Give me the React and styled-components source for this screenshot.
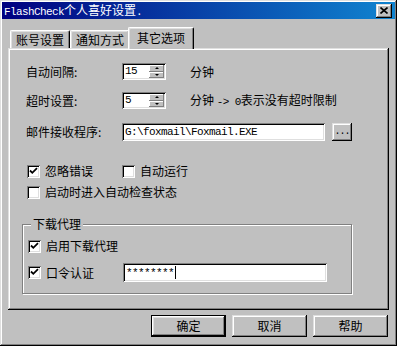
import React from "react";
import styled, { createGlobalStyle } from "styled-components";

const Global = createGlobalStyle`
  html, body { margin: 0; padding: 0; background: #c0c0c0; }
  body {
    font-family: "Noto Sans CJK SC", "Liberation Sans", sans-serif;
    font-size: 12px;
    color: #000;
  }
  * { box-sizing: border-box; }
`;

const raised = `box-shadow: inset -1px -1px #000, inset 1px 1px #dfdfdf, inset -2px -2px #808080, inset 2px 2px #fff;`;
const sunken = `box-shadow: inset 1px 1px #808080, inset -1px -1px #fff, inset 2px 2px #000, inset -2px -2px #dfdfdf;`;

const Window = styled.div`
  width: 397px;
  height: 346px;
  background: #c0c0c0;
  padding: 2px;
  ${raised}
  display: flex;
  flex-direction: column;
`;

const TitleBar = styled.div`
  height: 17px;
  flex: 0 0 17px;
  background: linear-gradient(to right, #000080, #1084d0);
  color: #fff;
  display: flex;
  align-items: center;
  justify-content: space-between;
  padding: 0 3px 0 2px;
  line-height: 14px;
`;

const TitleText = styled.span`
  font-size: 12px;
  white-space: nowrap;
`;

const Ascii = styled.span`
  font-family: "Liberation Mono", monospace;
  font-size: 11px;
  letter-spacing: -0.6px;
`;

const CloseBtn = styled.div`
  width: 16px;
  height: 14px;
  background: #c0c0c0;
  ${raised}
  display: flex;
  align-items: center;
  justify-content: center;
`;

const Body = styled.div`
  flex: 1;
  display: flex;
  flex-direction: column;
  padding: 0 6px;
`;

const TabStrip = styled.div`
  margin-top: 8px;
  height: 21px;
  flex: 0 0 21px;
  display: flex;
  align-items: flex-end;
  padding-left: 2px;
`;

const Tab = styled.div`
  position: relative;
  z-index: ${(p) => (p.$active ? 2 : 0)};
  width: ${(p) => (p.$active ? 66 : 60)}px;
  height: ${(p) => (p.$active ? 22 : 18)}px;
  margin: 0 ${(p) => (p.$active ? -2 : 0)}px ${(p) => (p.$active ? -1 : 0)}px;
  background: #c0c0c0;
  border-top: 1px solid #fff;
  border-left: 1px solid #fff;
  border-right: 1px solid #000;
  border-radius: 2px 2px 0 0;
  box-shadow: inset -1px 0 #808080, inset 1px 1px #dfdfdf;
  display: flex;
  align-items: ${(p) => (p.$active ? "flex-start" : "center")};
  padding-top: ${(p) => (p.$active ? 3 : 0)}px;
  justify-content: center;
  font-size: 12px;
  line-height: 14px;
`;

const Panel = styled.div`
  position: relative;
  z-index: 1;
  height: 262px;
  flex: 0 0 262px;
  background: #c0c0c0;
  ${raised}
  padding: 15px 0 0 18px;
  display: flex;
  flex-direction: column;
`;

const FieldRow = styled.div`
  display: grid;
  grid-template-columns: 96px auto auto 1fr;
  align-items: center;
  height: ${(p) => p.$h}px;
  margin-top: ${(p) => p.$mt || 0}px;
`;

const Label = styled.span`
  font-size: 12px;
  line-height: 14px;
  white-space: nowrap;
`;

const Unit = styled.span`
  margin-left: 24px;
  font-size: 12px;
  line-height: 14px;
  white-space: nowrap;
`;

const SpinBox = styled.div`
  width: 44px;
  height: 17px;
  background: #fff;
  padding: 2px 2px 2px 2px;
  ${sunken}
  display: flex;
`;

const SpinValue = styled.span`
  flex: 1;
  font-family: "Liberation Mono", monospace;
  font-size: 11px;
  letter-spacing: -0.6px;
  line-height: 13px;
  padding-left: 1px;
`;

const SpinButtons = styled.div`
  width: 15px;
  display: flex;
  flex-direction: column;
`;

const SpinBtn = styled.div`
  flex: 1;
  background: #c0c0c0;
  box-shadow: inset -1px -1px #808080, inset 1px 1px #fff;
  display: flex;
  align-items: center;
  justify-content: center;
`;

const Arrow = styled.span`
  width: 0;
  height: 0;
  border-left: 2px solid transparent;
  border-right: 2px solid transparent;
  ${(p) => (p.$up ? "border-bottom: 2px solid #000;" : "border-top: 2px solid #000;")}
`;

const TextBox = styled.div`
  width: ${(p) => p.$w}px;
  height: ${(p) => p.$h}px;
  background: #fff;
  ${sunken}
  display: flex;
  align-items: center;
  padding: 0 3px;
  font-family: "Liberation Mono", monospace;
  font-size: 11px;
  letter-spacing: -0.6px;
  white-space: nowrap;
  overflow: hidden;
`;

const Caret = styled.span`
  display: inline-block;
  width: 1px;
  height: 13px;
  background: #000;
  margin-left: 1px;
`;

const SmallBtn = styled.div`
  margin-left: 7px;
  width: 20px;
  height: 18px;
  background: #c0c0c0;
  ${raised}
  display: flex;
  align-items: center;
  justify-content: center;
  font-family: "Liberation Mono", monospace;
  font-size: 10px;
  letter-spacing: -1px;
  line-height: 10px;
`;

const CheckRow = styled.div`
  display: grid;
  grid-template-columns: 95px auto 1fr;
  align-items: center;
  height: ${(p) => p.$h || 18}px;
  margin-top: ${(p) => p.$mt || 0}px;
  padding-left: ${(p) => p.$pl || 0}px;
`;

const CheckItem = styled.label`
  display: flex;
  align-items: center;
  gap: 5px;
  font-size: 12px;
  line-height: 14px;
  white-space: nowrap;
`;

const Box = styled.span`
  width: 13px;
  height: 13px;
  flex: 0 0 13px;
  background: #fff;
  ${sunken}
  display: flex;
  align-items: center;
  justify-content: center;
`;

const Group = styled.div`
  position: relative;
  margin: 23px 0 0 -4px;
  width: 330px;
  height: 70px;
  border: 1px solid #808080;
  box-shadow: inset 1px 1px #fff, 1px 1px #fff;
  padding: 12px 0 0 5px;
`;

const Legend = styled.span`
  position: absolute;
  left: 8px;
  top: -8px;
  padding: 0 2px;
  background: #c0c0c0;
  font-size: 12px;
  line-height: 14px;
`;

const ButtonRow = styled.div`
  margin-top: 5px;
  display: flex;
  justify-content: flex-end;
  gap: 6px;
  padding-right: 1px;
`;

const Button = styled.div`
  width: 75px;
  height: 22px;
  background: #c0c0c0;
  ${(p) =>
    p.$default
      ? "border: 1px solid #000; box-shadow: inset -1px -1px #000, inset 1px 1px #fff, inset -2px -2px #808080, inset 2px 2px #dfdfdf;"
      : raised}
  display: flex;
  align-items: center;
  justify-content: center;
  font-size: 12px;
  line-height: 14px;
`;

const Check = ({ on }) => (
  <Box>
    {on && (
      <svg width="9" height="9" viewBox="0 0 9 9">
        <path d="M1 3.5 L3.3 5.8 L8 1.2" stroke="#000" strokeWidth="1.8" fill="none" />
      </svg>
    )}
  </Box>
);

const Spinner = ({ value }) => (
  <SpinBox>
    <SpinValue>{value}</SpinValue>
    <SpinButtons>
      <SpinBtn>
        <Arrow $up />
      </SpinBtn>
      <SpinBtn>
        <Arrow />
      </SpinBtn>
    </SpinButtons>
  </SpinBox>
);

export default function App() {
  return (
    <>
      <Global />
      <Window>
        <TitleBar>
          <TitleText>
            <Ascii>FlashCheck</Ascii>个人喜好设置<Ascii>.</Ascii>
          </TitleText>
          <CloseBtn>
            <svg width="8" height="7" viewBox="0 0 8 7">
              <path d="M0.5 0.5 L7.5 6.5 M7.5 0.5 L0.5 6.5" stroke="#000" strokeWidth="1.6" />
            </svg>
          </CloseBtn>
        </TitleBar>
        <Body>
          <TabStrip>
            <Tab>账号设置</Tab>
            <Tab>通知方式</Tab>
            <Tab $active>其它选项</Tab>
          </TabStrip>
          <Panel>
            <FieldRow $h={17}>
              <Label>自动间隔:</Label>
              <Spinner value="15" />
              <Unit>分钟</Unit>
            </FieldRow>
            <FieldRow $h={17} $mt={12}>
              <Label>超时设置:</Label>
              <Spinner value="5" />
              <Unit>
                分钟 <Ascii>-&gt; 0</Ascii>表示没有超时限制
              </Unit>
            </FieldRow>
            <FieldRow $h={18} $mt={14}>
              <Label>邮件接收程序:</Label>
              <TextBox $w={203} $h={18}>G:\foxmail\Foxmail.EXE</TextBox>
              <SmallBtn>...</SmallBtn>
            </FieldRow>
            <CheckRow $mt={21} $pl={1}>
              <CheckItem>
                <Check on />
                忽略错误
              </CheckItem>
              <CheckItem>
                <Check />
                自动运行
              </CheckItem>
            </CheckRow>
            <CheckRow $mt={3} $pl={1}>
              <CheckItem>
                <Check />
                启动时进入自动检查状态
              </CheckItem>
            </CheckRow>
            <Group>
              <Legend>下载代理</Legend>
              <CheckRow>
                <CheckItem>
                  <Check on />
                  启用下载代理
                </CheckItem>
              </CheckRow>
              <CheckRow $mt={8} $h={19}>
                <CheckItem>
                  <Check on />
                  口令认证
                </CheckItem>
                <TextBox $w={204} $h={19}>
                  ********
                  <Caret />
                </TextBox>
              </CheckRow>
            </Group>
          </Panel>
          <ButtonRow>
            <Button $default>确定</Button>
            <Button>取消</Button>
            <Button>帮助</Button>
          </ButtonRow>
        </Body>
      </Window>
    </>
  );
}
